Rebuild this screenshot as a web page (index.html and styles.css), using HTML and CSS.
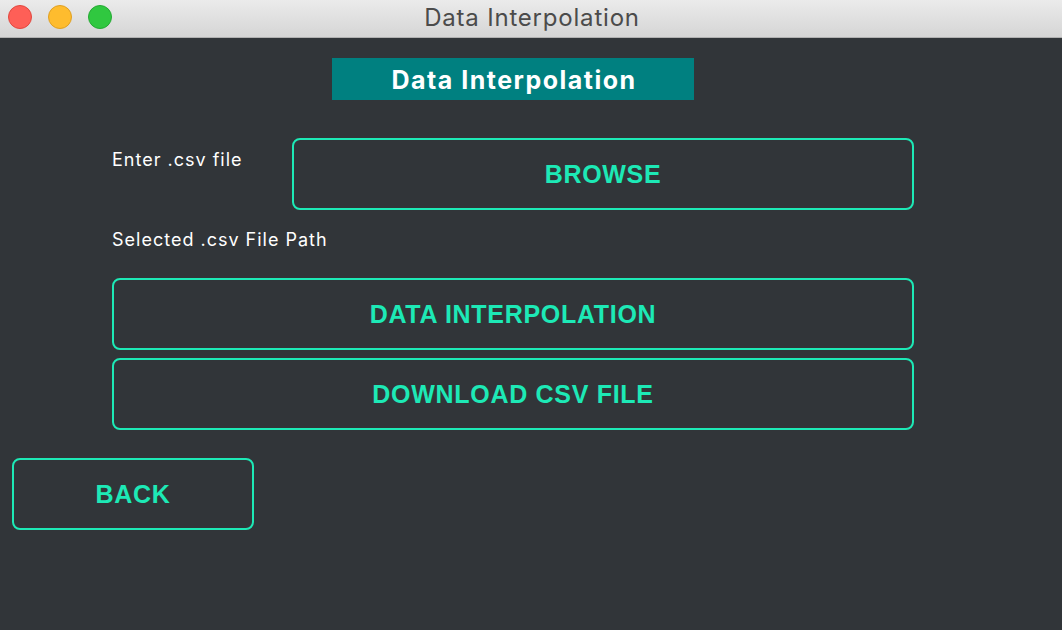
FILE: index.html
```html
<!DOCTYPE html>
<html>
<head>
<meta charset="utf-8">
<link rel="stylesheet" href="styles.css">
</head>
<body>
<div class="window">
  <div class="titlebar">
    <div class="lights">
      <span class="light red"></span>
      <span class="light yellow"></span>
      <span class="light green"></span>
    </div>
    <div class="wintitle">Data Interpolation</div>
  </div>
  <div class="content">
    <div class="main">
      <div class="header">Data Interpolation</div>
      <div class="row-browse">
        <div class="label label-enter">Enter .csv file</div>
        <button class="btn btn-browse">BROWSE</button>
      </div>
      <div class="label label-path">Selected .csv File Path</div>
      <div class="actions">
        <button class="btn btn-wide">DATA INTERPOLATION</button>
        <button class="btn btn-wide">DOWNLOAD CSV FILE</button>
      </div>
    </div>
    <div class="back-row">
      <button class="btn btn-back">BACK</button>
    </div>
  </div>
</div>
</body>
</html>
```

FILE: styles.css
```css
* { box-sizing: border-box; }
html, body {
  margin: 0;
  padding: 0;
  width: 1062px;
  height: 630px;
  overflow: hidden;
  background: #313539;
}
.window {
  width: 1062px;
  height: 630px;
  display: flex;
  flex-direction: column;
  font-family: Inter, "Open Sans", "Liberation Sans", sans-serif;
}
.titlebar {
  height: 38px;
  flex: none;
  background: linear-gradient(#ebebeb, #d5d5d5);
  border-bottom: 1px solid #b1b1b1;
  position: relative;
  display: flex;
  align-items: center;
  justify-content: center;
}
.lights {
  position: absolute;
  left: 8px;
  top: 5px;
  display: flex;
  gap: 16px;
}
.light {
  width: 24px;
  height: 24px;
  border-radius: 50%;
  display: block;
}
.red { background: #fe5f57; border: 1px solid #e1483f; }
.yellow { background: #febc2e; border: 1px solid #dfa023; }
.green { background: #30c840; border: 1px solid #25a934; }
.wintitle {
  font-size: 24px;
  letter-spacing: 0.8px;
  color: #4b4b4b;
  margin-top: -3px;
  margin-left: 2px;
}
.content {
  flex: 1;
  padding-top: 20px;
}
.main {
  margin-left: 112px;
  width: 802px;
  display: flex;
  flex-direction: column;
}
.header {
  align-self: center;
  width: 362px;
  height: 42px;
  background: #008080;
  color: #ffffff;
  font-weight: 700;
  font-size: 25px;
  letter-spacing: 1.5px;
  display: flex;
  align-items: center;
  justify-content: center;
  padding-top: 1px;
  padding-left: 2px;
}
.row-browse {
  margin-top: 38px;
  display: flex;
  align-items: flex-start;
}
.label {
  color: #ffffff;
  font-size: 18px;
  letter-spacing: 1px;
}
.label-enter {
  width: 180px;
  padding-top: 11px;
}
.btn {
  background: transparent;
  border: 2px solid #1de9b6;
  border-radius: 8px;
  color: #1de9b6;
  font-family: "Liberation Sans", Arial, sans-serif;
  font-weight: 700;
  font-size: 25px;
  letter-spacing: 0.7px;
  height: 72px;
  padding: 0;
  display: flex;
  align-items: center;
  justify-content: center;
}
.btn-browse { width: 622px; }
.label-path {
  margin-top: 19px;
  height: 49px;
}
.actions {
  display: flex;
  flex-direction: column;
  gap: 8px;
}
.btn-wide { width: 802px; }
.back-row {
  margin-top: 28px;
  padding-left: 12px;
}
.btn-back { width: 242px; }
```
